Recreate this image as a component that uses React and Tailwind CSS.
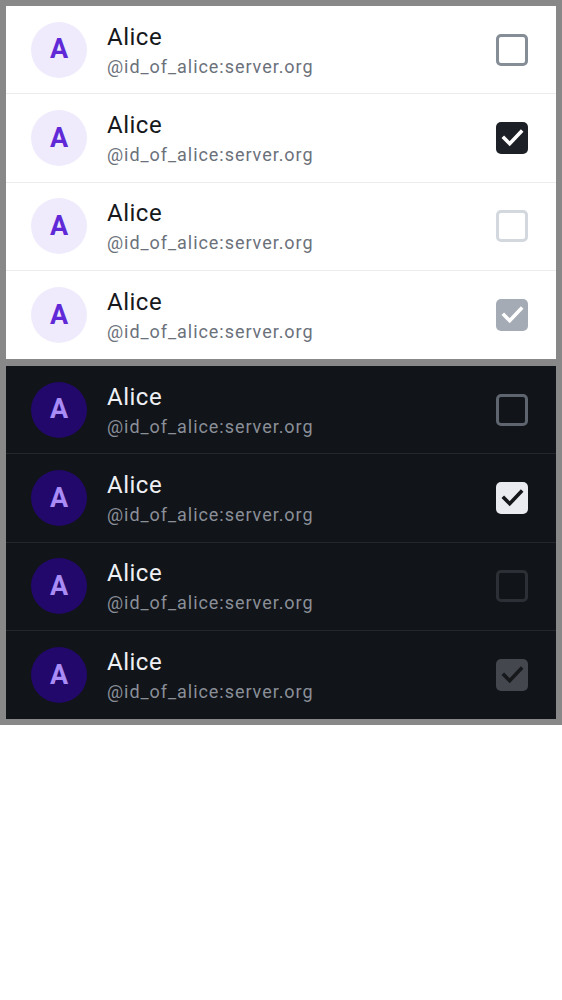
const rows = [
  { checked: false, disabled: false },
  { checked: true, disabled: false },
  { checked: false, disabled: true },
  { checked: true, disabled: true },
];

const Check = ({ className }) => (
  <svg className={className} viewBox="0 0 24 24" fill="none" stroke="currentColor" strokeWidth="3.2" strokeLinecap="square">
    <path d="M4.5 12.5l5 5L19.5 7" />
  </svg>
);

function Box({ dark, checked, disabled }) {
  let cls;
  if (!dark) {
    if (checked) cls = disabled ? "bg-[#a5abb4] text-white" : "bg-[#1d2026] text-white";
    else cls = disabled ? "border-[3px] border-[#d3d8df]" : "border-[3px] border-[#858d97]";
  } else {
    if (checked) cls = disabled ? "bg-[#44474e] text-[#16181c]" : "bg-[#e9ebf0] text-[#14161a]";
    else cls = disabled ? "border-[3px] border-[#2c3036]" : "border-[3px] border-[#5e656f]";
  }
  return (
    <div className={`w-8 h-8 rounded-[5px] flex items-center justify-center ${cls}`}>
      {checked && <Check className="w-[27px] h-[27px]" />}
    </div>
  );
}

function Row({ dark, checked, disabled, last }) {
  return (
    <div
      className={`h-[88.25px] flex items-center pl-[25px] pr-[28px] ${
        last ? "" : dark ? "border-b border-[#24272c]" : "border-b border-[#ececee]"
      }`}
    >
      <div
        className={`w-14 h-14 rounded-full flex items-center justify-center text-[27px] font-bold ${
          dark ? "bg-[#22086a] text-[#a98cf6]" : "bg-[#efebfd] text-[#6028d6]"
        }`}
      >
        A
      </div>
      <div className="flex-1 ml-[20px] flex flex-col mt-[4px]">
        <span className={`text-[24px] leading-[30px] tracking-[0.5px] ${dark ? "text-[#eef0f4]" : "text-[#16181c]"}`}>
          Alice
        </span>
        <span className={`text-[18px] leading-[30px] tracking-[0.95px] ${dark ? "text-[#8a8f98]" : "text-[#6b717b]"}`}>
          @id_of_alice:server.org
        </span>
      </div>
      <Box dark={dark} checked={checked} disabled={disabled} />
    </div>
  );
}

export default function App() {
  return (
    <div className="bg-white min-h-[1000px]" style={{ fontFamily: "Roboto, sans-serif" }}>
      <div className="bg-[#888888] p-[6px] flex flex-col gap-[7px]">
        <div className="bg-white flex flex-col">
          {rows.map((r, i) => (
            <Row key={i} {...r} last={i === rows.length - 1} />
          ))}
        </div>
        <div className="bg-[#111418] flex flex-col">
          {rows.map((r, i) => (
            <Row key={i} dark {...r} last={i === rows.length - 1} />
          ))}
        </div>
      </div>
    </div>
  );
}
